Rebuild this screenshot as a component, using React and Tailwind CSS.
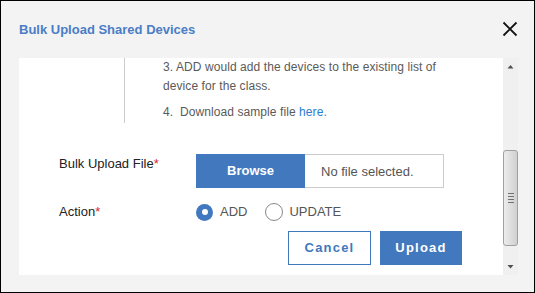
import React from "react";

export default function App() {
  const font = { fontFamily: '"Liberation Sans", Arial, sans-serif' };
  return (
    <div
      className="w-[535px] h-[293px] border border-black bg-[#f3f3f3] flex flex-col overflow-hidden"
      style={font}
    >
      {/* Header */}
      <div className="h-[57px] flex items-center justify-between pl-[18px] pr-[16px] shrink-0">
        <div className="text-[13px] font-bold text-[#4a7dc6] pt-[1px]">Bulk Upload Shared Devices</div>
        <svg width="16" height="16" viewBox="0 0 16 16" className="mt-[-1px]">
          <path d="M1.5 1.5 L14.5 14.5 M14.5 1.5 L1.5 14.5" stroke="#111" strokeWidth="1.8" />
        </svg>
      </div>

      {/* Body */}
      <div className="flex ml-[18px] h-[217px] shrink-0">
        <div className="w-[484px] bg-white flex flex-col">
          {/* Instructions block */}
          <div className="flex h-[65px]">
            <div className="w-[106px] border-r border-[#cccccc] shrink-0" />
            <div className="pl-[38px] text-[12px] leading-[19px] text-[#5a5a5a] tracking-[0.08px]">
              <div>3. ADD would add the devices to the existing list of</div>
              <div>device for the class.</div>
              <div className="mt-[7px]">
                4.&nbsp; Download sample file <span className="text-[#2b7cd3]">here.</span>
              </div>
            </div>
          </div>

          {/* File row */}
          <div className="flex mt-[31px] pl-[40px]">
            <div className="w-[137px] text-[13px] text-[#222222] pt-[2px] leading-[16px]">
              Bulk Upload File<span className="text-[#e0262b]">*</span>
            </div>
            <div className="flex h-[34px]">
              <div className="w-[109px] bg-[#4178be] text-white font-bold text-[13px] flex items-center justify-center">
                Browse
              </div>
              <div className="w-[139px] border border-[#cccccc] border-l-0 flex items-center pl-[16px] text-[13px] text-[#555555] pt-[2px]">
                No file selected.
              </div>
            </div>
          </div>

          {/* Action row */}
          <div className="flex items-center mt-[15px] pl-[40px] h-[18px]">
            <div className="w-[137px] text-[13px] text-[#222222]">
              Action<span className="text-[#e0262b]">*</span>
            </div>
            <div className="flex items-center">
              <div className="w-[17px] h-[17px] rounded-full bg-[#4178be] flex items-center justify-center">
                <div className="w-[6px] h-[6px] rounded-full bg-white" />
              </div>
              <span className="ml-[7px] text-[13px] text-[#555555]">ADD</span>
              <div className="ml-[18px] w-[18px] h-[18px] rounded-full border border-[#888888] bg-white" />
              <span className="ml-[6px] text-[13px] text-[#555555]">UPDATE</span>
            </div>
          </div>

          {/* Buttons */}
          <div className="flex mt-[10px] pl-[269px] gap-[9px]">
            <button className="w-[83px] h-[34px] border border-[#4178be] bg-white text-[#4178be] font-bold text-[13px] tracking-[1.2px]">
              Cancel
            </button>
            <button className="w-[82px] h-[34px] bg-[#4178be] text-white font-bold text-[13px] tracking-[1.2px]">
              Upload
            </button>
          </div>
        </div>

        {/* Scrollbar */}
        <div className="w-[15px] bg-[#f0f0f0] flex flex-col items-center">
          <svg width="15" height="17" viewBox="0 0 15 17">
            <path d="M4.5 10.5 L7.5 7 L10.5 10.5 Z" fill="#505050" />
          </svg>
          <div className="mt-[75px] w-[15px] h-[96px] rounded-[3px] border border-[#a0a0a0] bg-gradient-to-r from-[#ececec] via-[#dedede] to-[#d0d0d0] flex flex-col items-center justify-center gap-[2px]">
            <div className="w-[6px] h-[1px] bg-[#707070]" />
            <div className="w-[6px] h-[1px] bg-[#707070]" />
            <div className="w-[6px] h-[1px] bg-[#707070]" />
            <div className="w-[6px] h-[1px] bg-[#707070]" />
          </div>
          <div className="flex-1" />
          <svg width="15" height="17" viewBox="0 0 15 17">
            <path d="M4.5 7 L7.5 10.5 L10.5 7 Z" fill="#505050" />
          </svg>
        </div>
      </div>
    </div>
  );
}
